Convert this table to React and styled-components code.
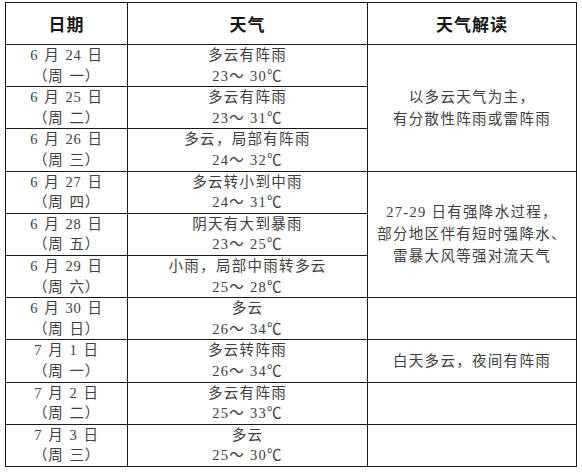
import React from "react";
import styled, { createGlobalStyle } from "styled-components";

const Global = createGlobalStyle`
  html, body { margin: 0; padding: 0; background: #ffffff; }
  body { width: 582px; height: 473px; overflow: hidden; }
`;

const Page = styled.div`
  padding: 2px 0 0 5px;
`;

const Table = styled.table`
  border-collapse: collapse;
  table-layout: fixed;
  width: 571px;
  border: 1px solid #1a1a1a;
`;

const Col = styled.col`
  width: ${(p) => p.$w}px;
`;

const Row = styled.tr`
  height: ${(p) => p.$h || 42}px;
`;

const HeadCell = styled.th`
  border: 1px solid #1a1a1a;
  padding: 0;
  text-align: center;
  vertical-align: middle;
  font-family: "Noto Sans CJK SC", sans-serif;
  font-weight: 700;
  font-size: 17px;
  line-height: 22px;
  color: #151515;
  letter-spacing: 1px;
`;

const Cell = styled.td`
  border: 1px solid #1a1a1a;
  padding: 0;
  text-align: center;
  vertical-align: middle;
  font-family: "Liberation Serif", "Noto Sans CJK SC", serif;
  font-size: 14.5px;
  color: #404040;
  letter-spacing: ${(p) => (p.$tight ? 0.8 : 1.3)}px;
  word-spacing: ${(p) => (p.$tight ? 1.5 : 0)}px;
  white-space: nowrap;
`;

const Line = styled.div`
  height: ${(p) => (p.$note ? 22 : 20.6)}px;
  line-height: ${(p) => (p.$note ? 22 : 20.6)}px;
  overflow: visible;
`;

const rows = [
  { date: "6 月 24 日", week: "（周 一）", wx: "多云有阵雨", t: "23～ 30℃" },
  { date: "6 月 25 日", week: "（周 二）", wx: "多云有阵雨", t: "23～ 31℃" },
  { date: "6 月 26 日", week: "（周 三）", wx: "多云，局部有阵雨", t: "24～ 32℃" },
  { date: "6 月 27 日", week: "（周 四）", wx: "多云转小到中雨", t: "24～ 31℃" },
  { date: "6 月 28 日", week: "（周 五）", wx: "阴天有大到暴雨", t: "23～ 25℃" },
  { date: "6 月 29 日", week: "（周 六）", wx: "小雨，局部中雨转多云", t: "25～ 28℃" },
  { date: "6 月 30 日", week: "（周 日）", wx: "多云", t: "26～ 34℃" },
  { date: "7 月 1 日", week: "（周 一）", wx: "多云转阵雨", t: "26～ 34℃" },
  { date: "7 月 2 日", week: "（周 二）", wx: "多云有阵雨", t: "25～ 33℃" },
  { date: "7 月 3 日", week: "（周 三）", wx: "多云", t: "25～ 30℃" },
];

const notes = {
  0: { span: 3, lines: ["以多云天气为主，", "有分散性阵雨或雷阵雨"] },
  3: { span: 3, lines: ["27-29 日有强降水过程，", "部分地区伴有短时强降水、", "雷暴大风等强对流天气"] },
  6: { span: 1, lines: [] },
  7: { span: 1, lines: ["白天多云，夜间有阵雨"] },
  8: { span: 1, lines: [] },
  9: { span: 1, lines: [] },
};

export default function App() {
  return (
    <Page>
      <Global />
      <Table>
        <colgroup>
          <Col $w={122} />
          <Col $w={240} />
          <Col $w={209} />
        </colgroup>
        <thead>
          <Row $h={42}>
            <HeadCell>日期</HeadCell>
            <HeadCell>天气</HeadCell>
            <HeadCell>天气解读</HeadCell>
          </Row>
        </thead>
        <tbody>
          {rows.map((r, i) => {
            const n = notes[i];
            return (
              <Row key={i}>
                <Cell $tight>
                  <Line>{r.date}</Line>
                  <Line>{r.week}</Line>
                </Cell>
                <Cell>
                  <Line>{r.wx}</Line>
                  <Line>{r.t}</Line>
                </Cell>
                {n && (
                  <Cell rowSpan={n.span}>
                    {n.lines.map((l, k) => (
                      <Line key={k} $note={n.span > 1}>
                        {l}
                      </Line>
                    ))}
                  </Cell>
                )}
              </Row>
            );
          })}
        </tbody>
      </Table>
    </Page>
  );
}
